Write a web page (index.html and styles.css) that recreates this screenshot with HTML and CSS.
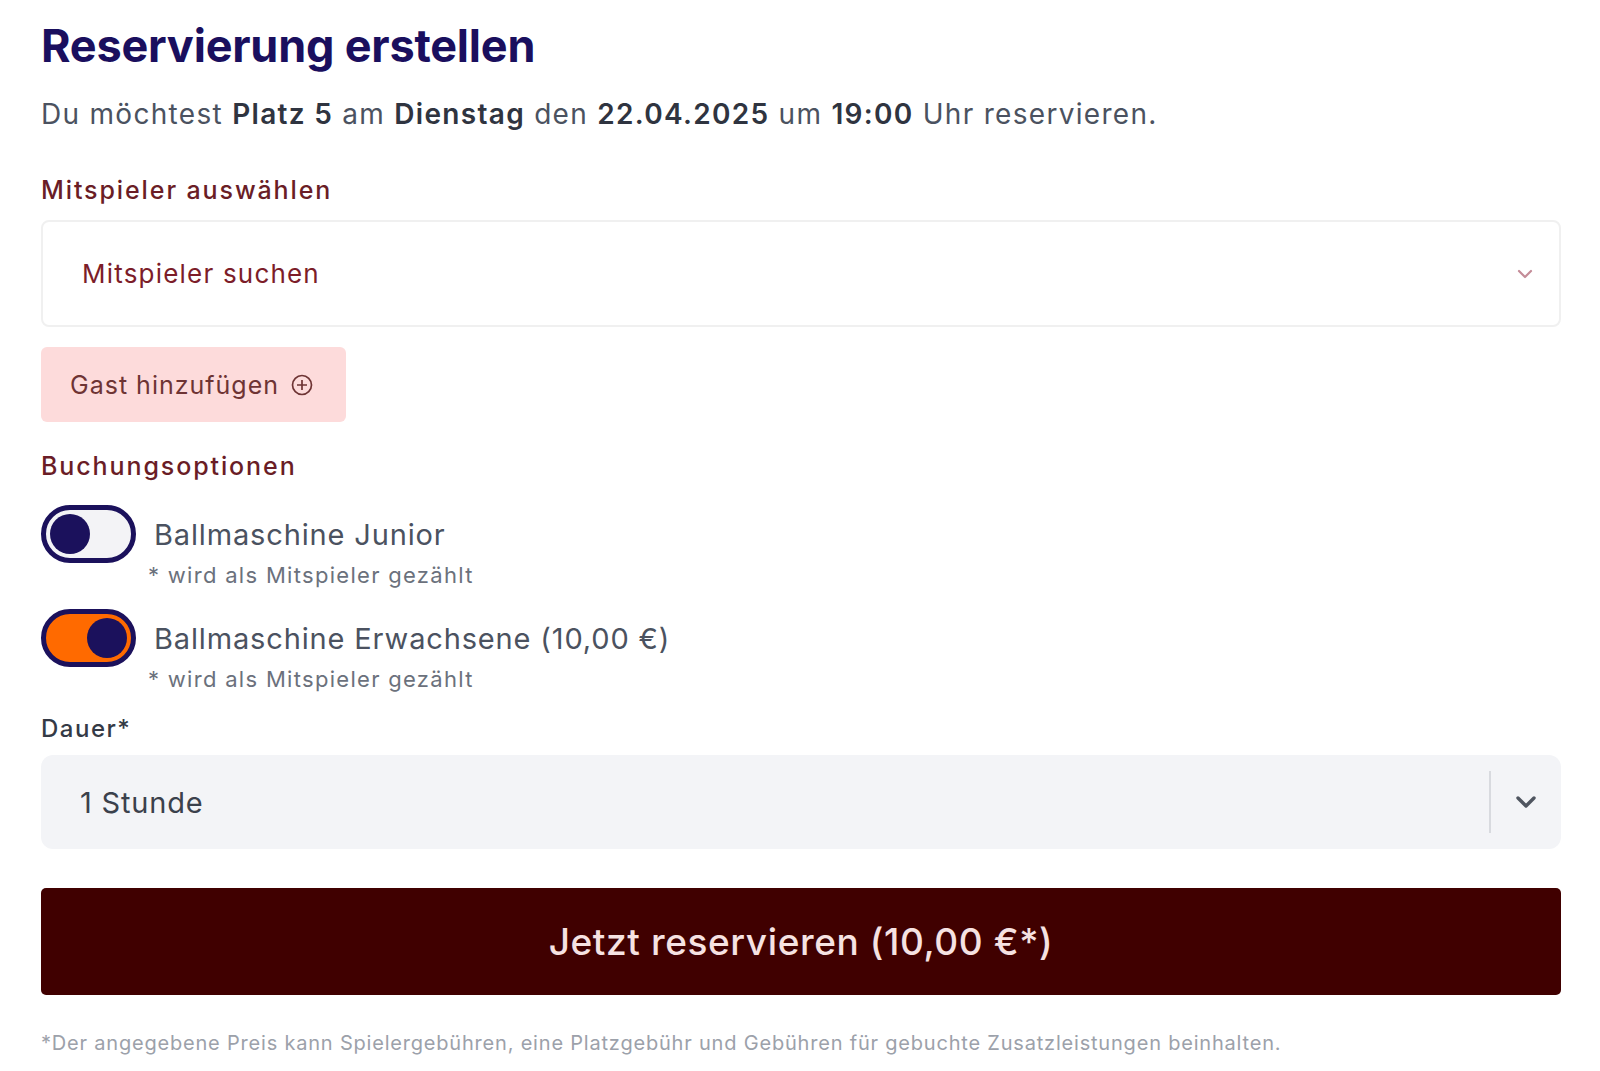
FILE: index.html
```html
<!DOCTYPE html>
<html lang="de">
<head>
<meta charset="utf-8"/>
<title>Reservierung erstellen</title>
<meta content="width=device-width, initial-scale=1.0" name="viewport"/>
<link rel="stylesheet" href="styles.css">
</head>
<body>
<div class="page">
  <h1 class="title">Reservierung erstellen</h1>
  <p class="intro">Du möchtest <b>Platz 5</b> am <b>Dienstag</b> den <b>22.04.2025</b> um <b>19:00</b> Uhr reservieren.</p>

  <label class="field-label">Mitspieler auswählen</label>
  <div class="player-select">
    <span class="placeholder">Mitspieler suchen</span>
    <svg class="chevron-small" width="16" height="10" viewBox="0 0 16 10"><path d="M2 2 L8 8 L14 2" fill="none" stroke="#c48c98" stroke-width="2.2" stroke-linecap="round" stroke-linejoin="round"/></svg>
  </div>

  <button class="guest-btn">Gast hinzufügen
    <svg width="22" height="22" viewBox="0 0 22 22"><circle cx="11" cy="11" r="9.5" fill="none" stroke="#6e3434" stroke-width="1.7"/><path d="M11 6 V16 M6 11 H16" stroke="#6e3434" stroke-width="1.7"/></svg>
  </button>

  <label class="field-label options-label">Buchungsoptionen</label>
  <div class="option">
    <span class="toggle"><span class="knob"></span></span>
    <div class="option-text">
      <div class="option-name">Ballmaschine Junior</div>
      <div class="option-note">* wird als Mitspieler gezählt</div>
    </div>
  </div>
  <div class="option">
    <span class="toggle on"><span class="knob"></span></span>
    <div class="option-text">
      <div class="option-name">Ballmaschine Erwachsene (10,00 €)</div>
      <div class="option-note">* wird als Mitspieler gezählt</div>
    </div>
  </div>

  <label class="duration-label">Dauer*</label>
  <div class="duration-select">
    <span class="value">1 Stunde</span>
    <span class="sep"></span>
    <svg class="chevron" width="22" height="14" viewBox="0 0 22 14"><path d="M3 3 L11 11 L19 3" fill="none" stroke="#4f5560" stroke-width="3.4" stroke-linecap="round" stroke-linejoin="round"/></svg>
  </div>

  <button class="submit-btn">Jetzt reservieren (10,00 €*)</button>
  <p class="footnote">*Der angegebene Preis kann Spielergebühren, eine Platzgebühr und Gebühren für gebuchte Zusatzleistungen beinhalten.</p>
</div>
</body>
</html>
```

FILE: styles.css
```css
body {
  margin: 0;
  background: #fff;
  font-family: Inter, 'Noto Sans', sans-serif;
}
.page {
  padding: 19px 39px 0 41px;
}
.title {
  margin: 0;
  font-size: 45px;
  line-height: 54px;
  font-weight: 700;
  color: #1a0f5e;
  letter-spacing: -0.2px;
}
.intro {
  margin: 23px 0 0;
  font-size: 28px;
  line-height: 36px;
  letter-spacing: 1.3px;
  color: #4b5260;
}
.intro b { font-weight: 600; color: #2f3440; }
.field-label {
  display: block;
  margin-top: 43px;
  font-size: 25px;
  line-height: 30px;
  font-weight: 500;
  letter-spacing: 1.9px;
  color: #6a1d26;
}
.player-select {
  margin-top: 15px;
  height: 107px;
  box-sizing: border-box;
  border: 2px solid #f0f0f0;
  border-radius: 8px;
  background: #fff;
  display: flex;
  align-items: center;
  justify-content: space-between;
  padding: 0 26px 0 39px;
}
.placeholder { font-size: 26px; letter-spacing: 1.2px; color: #7c1d29; }
.guest-btn {
  margin-top: 20px;
  height: 75px;
  padding: 0 33px 0 29px;
  border: none;
  border-radius: 6px;
  background: #fddbdb;
  color: #6e3434;
  font-family: inherit;
  font-size: 25px;
  letter-spacing: 1px;
  display: flex;
  align-items: center;
  gap: 12px;
}
.options-label { margin-top: 29px; }
.option {
  display: flex;
  gap: 18px;
  margin-top: 24px;
}
.option + .option { margin-top: 21px; }
.toggle {
  flex: none;
  width: 95px;
  height: 58px;
  box-sizing: border-box;
  border: 5px solid #1b115c;
  border-radius: 29px;
  background: #f3f3f6;
  padding: 4px;
  display: flex;
}
.toggle.on { background: #ff6a00; justify-content: flex-end; }
.knob {
  width: 40px;
  height: 40px;
  border-radius: 50%;
  background: #1b115c;
}
.option-name {
  margin-top: 13px;
  font-size: 29px;
  line-height: 34px;
  letter-spacing: 0.85px;
  color: #4b5260;
}
.option-note {
  margin: 10px 0 0 -6px;
  font-size: 22px;
  line-height: 26px;
  letter-spacing: 1.3px;
  color: #6b717c;
}
.duration-label {
  display: block;
  margin-top: 22px;
  font-size: 24px;
  line-height: 30px;
  font-weight: 500;
  letter-spacing: 1.5px;
  color: #343a46;
}
.duration-select {
  margin-top: 11px;
  height: 94px;
  border-radius: 12px;
  background: #f3f4f7;
  display: flex;
  align-items: center;
  padding: 0 24px 0 39px;
}
.duration-select .value { flex: 1; font-size: 29px; letter-spacing: 0.8px; color: #3b414c; }
.sep { width: 2px; height: 62px; background: #d8dadf; margin-right: 24px; }
.submit-btn {
  display: block;
  width: 100%;
  margin-top: 39px;
  height: 107px;
  border: none;
  border-radius: 5px;
  background: #400000;
  color: #f6e2e2;
  font-family: inherit;
  font-size: 37px;
  font-weight: 500;
  letter-spacing: 0.6px;
}
.footnote {
  margin: 36px 0 0;
  font-size: 20px;
  line-height: 24px;
  letter-spacing: 0.8px;
  color: #9ca1aa;
}
```
